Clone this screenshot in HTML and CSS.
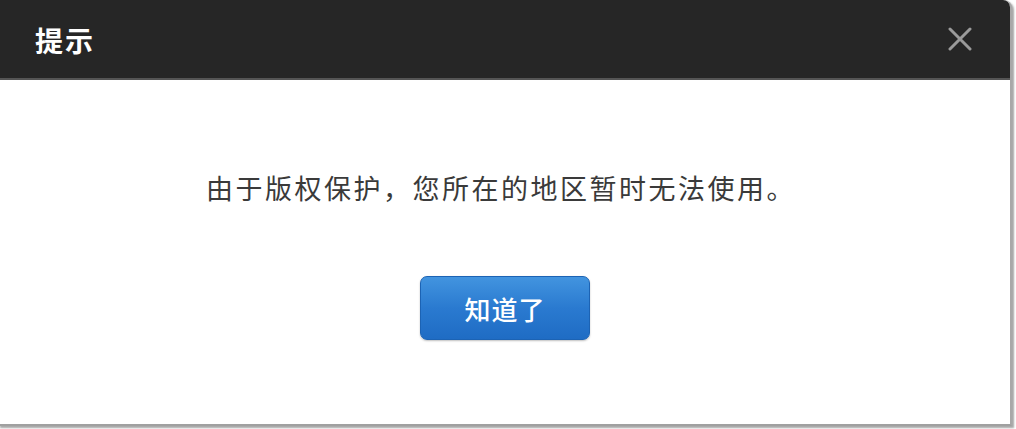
FILE: index.html
```html
<!DOCTYPE html>
<html lang="zh-CN">
<head>
<meta charset="utf-8">
<title>提示</title>
<link rel="stylesheet" href="styles.css">
</head>
<body>
<div class="dialog">
  <div class="dialog-header">
    <span class="dialog-title">提示</span>
    <span class="dialog-close" aria-label="关闭">
      <svg width="24" height="24" viewBox="0 0 24 24"><path d="M2 2L22 22M22 2L2 22" stroke="#9a9a9a" stroke-width="3" stroke-linecap="round"/></svg>
    </span>
  </div>
  <div class="dialog-body">
    <p class="dialog-message">由于版权保护，您所在的地区暂时无法使用。</p>
    <button class="dialog-button" type="button">知道了</button>
  </div>
</div>
</body>
</html>
```
FILE: styles.css
```css
html, body {
  margin: 0;
  padding: 0;
  background: #ffffff;
}
body {
  width: 1016px;
  height: 429px;
  overflow: hidden;
  font-family: "Noto Sans CJK SC", "Noto Sans", sans-serif;
}
.dialog {
  width: 1010px;
  height: 424px;
  background: #ffffff;
  border-left: 2px solid #e4e4e4;
  border-right: 2px solid #a8a8a8;
  border-bottom: 2px solid #a0a0a0;
  border-top-right-radius: 8px;
  box-shadow: 2px 2px 2px rgba(0,0,0,0.35);
  display: flex;
  flex-direction: column;
  box-sizing: content-box;
  margin-left: -2px;
}
.dialog-header {
  height: 78px;
  background: #262626;
  border-bottom: 2px solid #555555;
  border-top-right-radius: 7px;
  display: flex;
  align-items: center;
  justify-content: space-between;
  padding: 0 38px 0 35px;
}
.dialog-title {
  color: #ffffff;
  font-size: 28px;
  font-weight: 700;
  letter-spacing: 2px;
  line-height: 1;
  margin-top: 2px;
}
.dialog-close {
  display: flex;
  width: 24px;
  height: 24px;
}
.dialog-body {
  flex: 1;
  display: flex;
  flex-direction: column;
  align-items: center;
  padding-top: 92px;
}
.dialog-message {
  margin: 0 8px 0 0;
  color: #3a3a3a;
  font-size: 27px;
  font-weight: 400;
  letter-spacing: 2.5px;
  line-height: 32px;
}
.dialog-button {
  margin-top: 72px;
  width: 170px;
  height: 64px;
  border: 1px solid #1c63b4;
  border-radius: 7px;
  background: linear-gradient(#4294df, #2a7ad0 50%, #1f6cc4);
  color: #ffffff;
  font-family: "Noto Sans CJK SC", "Noto Sans", sans-serif;
  font-size: 26px;
  font-weight: 500;
  letter-spacing: 1px;
  padding: 0;
  box-shadow: 0 1px 2px rgba(0,0,0,0.25);
}
```
